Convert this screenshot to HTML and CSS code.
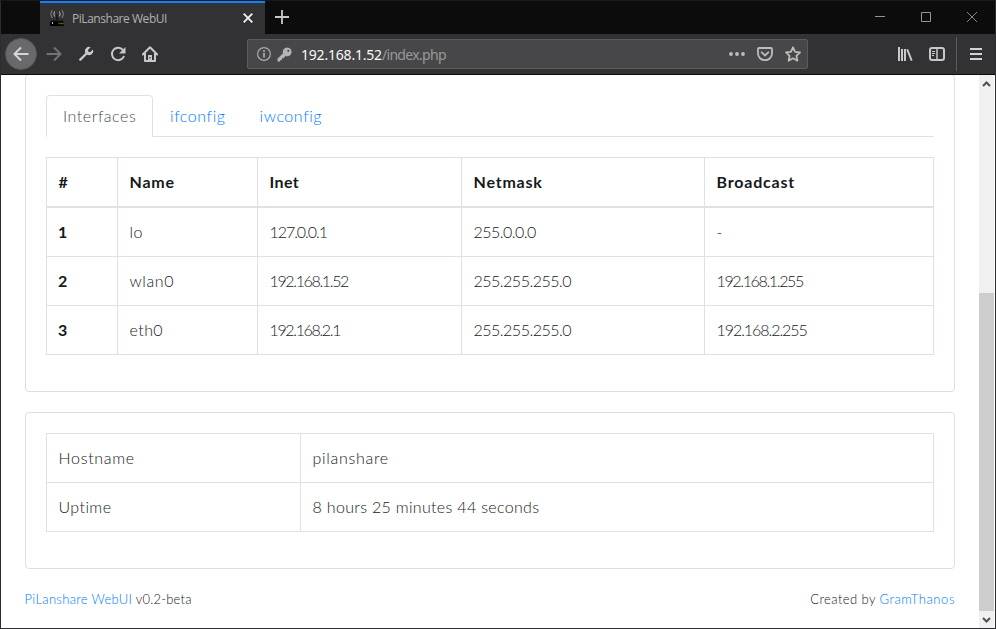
FILE: index.html
```html
<!DOCTYPE html>
<html lang="en">
<head>
<meta charset="utf-8">
<title>PiLanshare WebUI</title>
<link rel="stylesheet" href="styles.css">
</head>
<body>
<div class="window">
  <header class="titlebar">
    <div class="tab">
      <svg class="favicon" width="16" height="18" viewBox="0 0 16 18">
        <path d="M8 5.5V13" stroke="#111" stroke-width="1.4"/>
        <path d="M5.6 2.5Q4 5 5.6 7.5M10.4 2.5Q12 5 10.4 7.5" fill="none" stroke="#bbb"/>
        <path d="M3.2 1Q.2 5 3.2 9M12.8 1Q15.8 5 12.8 9" fill="none" stroke="#888"/>
        <rect x="2" y="11" width="12" height="2" fill="#1c1c1e"/>
        <rect x="1" y="12.5" width="14" height="4.5" rx="1" fill="#000"/>
        <path d="M3 14h1" stroke="#fff" stroke-width="1.5"/>
        <path d="M9.5 14.5h1" stroke="#f33" stroke-width="1.5"/>
        <path d="M11.5 14.5h1" stroke="#d92" stroke-width="1.5"/>
        <path d="M13.5 14.5h1" stroke="#4c4" stroke-width="1.5"/>
      </svg>
      <span class="tab-title">PiLanshare WebUI</span>
      <svg class="tab-close" width="10" height="10" viewBox="0 0 10 10"><path d="M.7.7l8.6 8.6M9.3.7L.7 9.3" stroke="#f0f0f0" stroke-width="1.8"/></svg>
    </div>
    <svg class="new-tab" width="14" height="14" viewBox="0 0 14 14"><path d="M7 0v14M0 7h14" stroke="#c8c8c8" stroke-width="1.8"/></svg>
    <div class="window-buttons">
      <svg width="10" height="10" viewBox="0 0 10 10"><path d="M0 4.5h10" stroke="#949494"/></svg>
      <svg width="10" height="10" viewBox="0 0 10 10"><path d="M.5.5h9v9h-9z" fill="none" stroke="#949494"/></svg>
      <svg width="10" height="10" viewBox="0 0 10 10"><path d="M0 0l10 10M10 0L0 10" stroke="#949494" stroke-width=".9"/></svg>
    </div>
  </header>

  <div class="toolbar">
    <span class="back"><svg width="16" height="16" viewBox="0 0 16 16"><path d="M15.5 8H1.5M8 1.5L1.5 8 8 14.5" fill="none" stroke="#d6d6d6" stroke-width="2"/></svg></span>
    <svg class="forward" width="16" height="16" viewBox="0 0 16 16"><path d="M.5 8h14M8 1.5L14.5 8 8 14.5" fill="none" stroke="#737375" stroke-width="2"/></svg>
    <svg class="tool" width="16" height="16" viewBox="0 0 16 16"><path d="M2.3 13.7L9 7" stroke="#c8c8ca" stroke-width="2.4" stroke-linecap="round"/><path d="M12.7 1.2A4.2 4.2 0 0 0 7.3 6.8L9.2 8.8A4.2 4.2 0 0 0 14.9 3.4L12.4 5.9 10.3 5.7 10.1 3.7z" fill="#c8c8ca"/></svg>
    <svg class="tool" width="16" height="16" viewBox="0 0 16 16"><path d="M13.3 4.5A6.2 6.2 0 1 0 14 10" fill="none" stroke="#c8c8ca" stroke-width="2"/><path d="M15.5 1v6.5H9z" fill="#c8c8ca"/></svg>
    <svg class="tool" width="16" height="16" viewBox="0 0 16 16"><path d="M.8 8.5L8 1.3l7.2 7.2M3 7.5V15h10V7.5" fill="none" stroke="#c8c8ca" stroke-width="2" stroke-linejoin="round" stroke-linecap="round"/><path d="M6 14.5V9h4v5.500z" fill="#c8c8ca"/><path d="M8 11v1.500" stroke="#323234" stroke-width="1.2"/></svg>
    <div class="urlbar">
      <svg width="14" height="14" viewBox="0 0 14 14"><circle cx="7" cy="7" r="6.400" fill="none" stroke="#aaa" stroke-width="1.200"/><path d="M7 6v4.500M7 3.300v1.700" stroke="#b4b4b4" stroke-width="1.600"/></svg>
      <svg class="key" width="15" height="15" viewBox="0 0 15 15"><path fill-rule="evenodd" d="M10.200.5a4.400 4.400 0 0 0-4.200 5.700L.5 11.800V14.500h2.800V13H5v-1.700h1.500L8.600 9A4.400 4.400 0 1 0 10.200.500zM11.300 2.700a1.100 1.100 0 1 1 0 2.200 1.100 1.100 0 0 1 0-2.200z" fill="#b4b4b4"/></svg>
      <span class="url"><span class="host">192.168.1.52</span><span class="path">/index.php</span></span>
      <svg width="16" height="16" viewBox="0 0 16 16"><g fill="#bdbdbd"><circle cx="2" cy="8" r="1.900"/><circle cx="8" cy="8" r="1.900"/><circle cx="14" cy="8" r="1.900"/></g></svg>
      <svg class="pocket" width="16" height="16" viewBox="0 0 16 16"><path d="M2 2h12q1 0 1 1v4.500a7 6.700 0 0 1-14 0V3q0-1 1-1z" fill="none" stroke="#bdbdbd" stroke-width="1.800"/><path d="M4.700 6.300L8 9.500l3.300-3.200" fill="none" stroke="#bdbdbd" stroke-width="1.800" stroke-linecap="round"/></svg>
      <svg width="16" height="16" viewBox="0 0 16 16"><path d="M8 1.300l2.100 4.500 4.900.6-3.600 3.400 1 4.900L8 12.300l-4.400 2.400 1-4.900L1 6.400l4.900-.6z" fill="none" stroke="#bdbdbd" stroke-width="1.800" stroke-linejoin="round"/></svg>
    </div>
    <svg class="library" width="16" height="16" viewBox="0 0 16 16"><path d="M2 1v14M5 3v12M8 3v12" stroke="#c8c8ca" stroke-width="2"/><path d="M10.200 3.300L14.700 14.700" stroke="#c8c8ca" stroke-width="1.900"/></svg>
    <svg class="sidebar" width="16" height="16" viewBox="0 0 16 16"><rect x="1" y="2" width="14" height="12" rx="2" fill="none" stroke="#c8c8ca" stroke-width="2"/><path d="M8 2v12" stroke="#c8c8ca" stroke-width="1.500"/><path d="M3 5.500h3M3 7.500h3M3 9.500h2" stroke="#c8c8ca"/></svg>
    <span class="divider"></span>
    <svg class="menu" width="12" height="12" viewBox="0 0 12 12"><path d="M0 1h12M0 6h12M0 11h12" stroke="#d2d2d4" stroke-width="2"/></svg>
  </div>

  <div class="viewport">
    <main class="page">
      <section class="card card-top">
        <nav class="tabs">
          <a class="nav active semi">Interfaces</a><a class="nav wide">ifconfig</a><a class="nav wide">iwconfig</a>
        </nav>
        <table class="table interfaces">
          <colgroup><col class="c-id"><col class="c-name"><col class="c-inet"><col class="c-mask"><col></colgroup>
          <thead><tr><th>#</th><th>Name</th><th class="semi">Inet</th><th>Netmask</th><th>Broadcast</th></tr></thead>
          <tbody>
            <tr><th>1</th><td class="wide">lo</td><td class="close">127.0.0.1</td><td class="snug">255.0.0.0</td><td class="dash">-</td></tr>
            <tr><th>2</th><td class="wide">wlan0</td><td class="tight">192.168.1.52</td><td class="snug">255.255.255.0</td><td class="tight">192.168.1.255</td></tr>
            <tr><th>3</th><td class="semi">eth0</td><td class="tight">192.168.2.1</td><td class="snug">255.255.255.0</td><td class="close">192.168.2.255</td></tr>
          </tbody>
        </table>
      </section>
      <section class="card">
        <table class="table system">
          <colgroup><col class="c-label"><col></colgroup>
          <tbody>
            <tr><td class="wider">Hostname</td><td class="wider">pilanshare</td></tr>
            <tr><td class="semi">Uptime</td><td class="phrase">8 hours 25 minutes 44 seconds</td></tr>
          </tbody>
        </table>
      </section>
      <footer class="footer">
        <div><a class="phrase">PiLanshare WebUI</a> <span class="version">v0.2-beta</span></div>
        <div><span class="semi">Created by</span> <a class="wide">GramThanos</a></div>
      </footer>
    </main>
    <div class="scrollbar">
      <svg width="15" height="17" viewBox="0 0 15 17"><path d="M4 11L7.500 7.500l3.500 3.500" fill="none" stroke="#505050" stroke-width="2"/></svg>
      <div class="thumb"></div>
      <svg width="15" height="17" viewBox="0 0 15 17"><path d="M4 7l3.500 3.500L11 7" fill="none" stroke="#505050" stroke-width="2"/></svg>
    </div>
  </div>
</div>
</body>
</html>
```
FILE: styles.css
```css
* { box-sizing: border-box; }
body { margin: 0; }
svg { display: block; flex: none; }

.window {
  width: 996px;
  height: 629px;
  display: flex;
  flex-direction: column;
  overflow: hidden;
  border: 1px solid #2d2d2f;
  border-top-color: #19191a;
  background: #fff;
}

/* Browser chrome */
.titlebar {
  height: 33px;
  flex: none;
  display: flex;
  align-items: center;
  background: #0c0c0d;
  font-family: "Open Sans", sans-serif;
}
.tab {
  width: 225px;
  height: 33px;
  margin-left: 39px;
  padding: 0 12px 0 9px;
  display: flex;
  align-items: center;
  background: #323234;
  border-top: 2px solid #0a84ff;
}
.favicon { margin-bottom: 2px; }
.tab-close { margin-bottom: 1px; }
.tab-title {
  flex: 1;
  margin-left: 7px;
  font-size: 12px;
  letter-spacing: -0.46px;
  color: #b1b1b3;
}
.new-tab { margin-left: 10px; margin-bottom: 1px; }
.window-buttons {
  margin-left: auto;
  margin-right: 18px;
  margin-bottom: 1px;
  display: flex;
  gap: 36px;
}

.toolbar {
  height: 41px;
  flex: none;
  padding: 0 12px 0 4px;
  display: flex;
  align-items: center;
  background: #323234;
  border-bottom: 1px solid #0c0c0d;
}
.back {
  width: 32px;
  height: 32px;
  display: flex;
  align-items: center;
  justify-content: center;
  border-radius: 50%;
  background: #69696b;
  border: 1px solid #575759;
}
.forward { margin-left: 9px; }
.tool { margin-left: 16px; }
.urlbar {
  width: 561px;
  height: 30px;
  margin-left: 89px;
  padding: 0 6px 0 9px;
  display: flex;
  align-items: center;
  background: #474749;
  border: 1px solid #5c5c5e;
  border-radius: 2px;
}
.key { margin-left: 6px; }
.url {
  flex: 1;
  margin-left: 9px;
  padding-top: 2px;
  font: 14px/28px "Noto Sans", sans-serif;
  color: #f9f9fa;
}
.host { letter-spacing: -0.2px; }
.path { letter-spacing: -0.68px; color: #98989a; }
.pocket { margin: 0 12px; }
.library { margin-left: 89px; }
.sidebar { margin-left: 16px; }
.divider {
  width: 1px;
  height: 34px;
  margin-left: 11px;
  background: #5c5c5e;
}
.menu { margin-left: 13px; }

/* Page */
.viewport {
  flex: 1;
  min-height: 0;
  display: flex;
  overflow: hidden;
  background: #fff;
}
.page {
  width: 978px;
  padding: 0 24px;
  font: 300 16px/24px Lato, sans-serif;
  color: #16191c;
}
.card {
  margin-bottom: 20px;
  padding: 20px 20px 36px;
  border: 1px solid #dfdfdf;
  border-radius: 4px;
}
.card-top { margin-top: -1px; }
.tabs {
  display: flex;
  margin-bottom: 20px;
  border-bottom: 1px solid #dee2e6;
}
.nav {
  height: 42px;
  margin-bottom: -1px;
  padding: 8px 16px 9px;
  border: 1px solid transparent;
  color: #007bff;
}
.nav.active {
  width: 107px;
  letter-spacing: 0.54px;
  color: #495057;
  background: #fff;
  border-color: #dee2e6 #dee2e6 #fff;
  border-radius: 4px 4px 0 0;
}
.table {
  width: 888px;
  table-layout: fixed;
  border-spacing: 0;
  border: solid #dee2e6;
  border-width: 1px 0 0 1px;
}
.table th, .table td {
  height: 49px;
  padding: 0 12px 1px 11.5px;
  text-align: left;
  white-space: nowrap;
  border: solid #dee2e6;
  border-width: 0 1px 1px 0;
}
.table th { font-weight: 700; letter-spacing: 0.8px; padding-left: 11px; }
.table thead th { height: 50px; padding-left: 11.5px; border-bottom-width: 2px; }
.c-id { width: 71px; }
.c-name { width: 140px; }
.c-inet { width: 204px; }
.c-mask { width: 243px; }
.c-label { width: 254px; }

.footer {
  display: flex;
  justify-content: space-between;
  margin: -1px 0 0 -0.5px;
  font-size: 13px;
  line-height: 22px;
}
.footer a { color: #007bff; }

/* Tracking */
.wider { letter-spacing: 0.7px; }
.wide { letter-spacing: 0.58px; }
.semi, .table th.semi { letter-spacing: 0.42px; }
.phrase { letter-spacing: 0.32px; }
.version { letter-spacing: 0.2px; }
.snug { letter-spacing: -0.5px; }
.close { letter-spacing: -1.06px; }
.tight { letter-spacing: -1.35px; }

.scrollbar {
  width: 15px;
  display: flex;
  flex-direction: column;
  justify-content: space-between;
  background: #f0f0f0;
}
.thumb {
  height: 318px;
  margin-top: auto;
  background: #cdcdcd;
}
```
